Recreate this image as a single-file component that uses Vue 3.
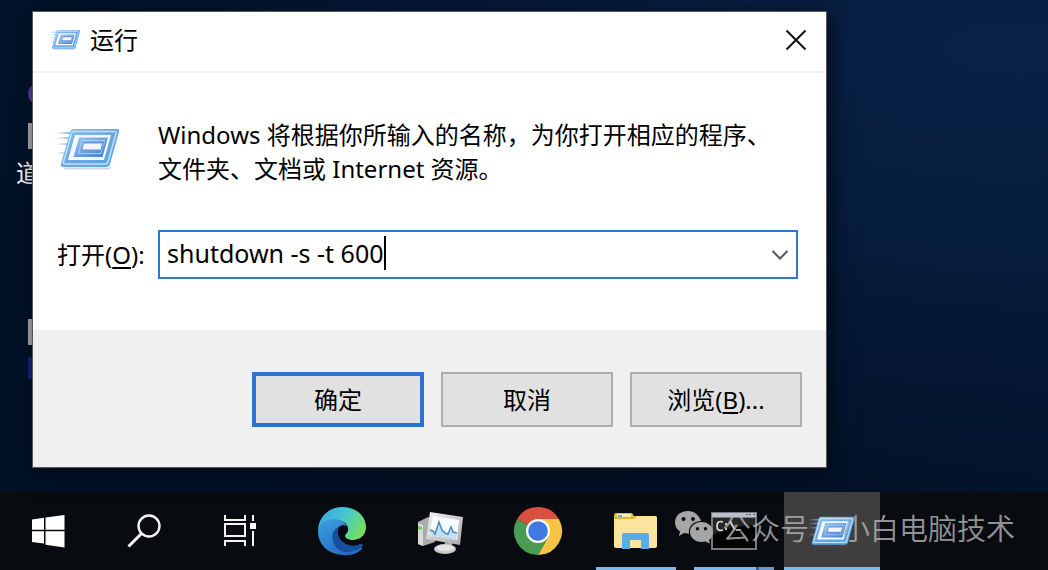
<script setup>
import { ref } from "vue";

const command = ref("shutdown -s -t 600");
const isOpen = ref(true);

// Programs pinned or running on the taskbar
const apps = [
  { id: "edge", label: "Microsoft Edge", state: "" },
  { id: "monitor", label: "性能监视器", state: "" },
  { id: "chrome", label: "Google Chrome", state: "" },
  { id: "explorer", label: "文件资源管理器", state: "running" },
  { id: "cmd", label: "命令提示符", state: "running stacked" },
  { id: "run", label: "运行", state: "active" },
];

const closeDialog = () => {
  isOpen.value = false;
};
</script>

<template>
  <div class="screen">
    <!-- Shared artwork of the Run icon -->
    <svg class="defs" width="0" height="0" aria-hidden="true">
      <defs>
        <linearGradient id="run-edge" x1="0" y1="0" x2="1" y2="1">
          <stop offset="0" stop-color="#8fc3ee" />
          <stop offset="0.5" stop-color="#6aa6e2" />
          <stop offset="1" stop-color="#58a5ea" />
        </linearGradient>
        <linearGradient id="run-core" x1="0" y1="0" x2="1" y2="1">
          <stop offset="0" stop-color="#9ccaf4" />
          <stop offset="1" stop-color="#3d7bd0" />
        </linearGradient>
        <linearGradient id="run-trail" x1="0" y1="0" x2="1" y2="0">
          <stop offset="0" stop-color="#8fc0ec" stop-opacity="0.1" />
          <stop offset="1" stop-color="#6ea9e0" />
        </linearGradient>
      </defs>
      <symbol id="run-icon" viewBox="0 0 64 42">
        <path d="M7 40.500h44q2 0 2.500-2" fill="none" stroke="#53657a" stroke-opacity=".25" stroke-width="2" />
        <path d="M0 4h15v2H0zM0 9h13v2H0zM0 15h11v2H0zM0 24h9v2H0z" fill="url(#run-trail)" />
        <path d="M16 1h44q3 0 2 3l-9 32q-1 3-4 3H6q-3 0-2-3l9-32q1-3 3-3z" fill="url(#run-edge)" />
        <path d="M16.500 3.500h41q2 0 1.500 2L51 34q-.5 2-2.500 2H8q-2 0-1.500-2l8-28.500q.5-2 2-2z" fill="none" stroke="#bfe0fa" stroke-width="1.500" />
        <path d="M18 7h36l-7 25H11z" class="run-face" />
        <path d="M22 9.500h29l-5.500 19.500H16.500z" fill="url(#run-core)" />
        <path d="M25 12.500h22.500l-3.500 13H21.500z" fill="none" stroke="#a9cff5" stroke-width="1" />
        <path d="M27 14h20l-2 9H24z" fill="#6b96d9" />
        <path d="M27 15.500h18l-1.500 6H25.500z" fill="#f3f5ff" />
      </symbol>
    </svg>

    <main class="desktop">
      <!-- Shortcuts peeking out from behind the dialog -->
      <div class="shortcut shortcut-top" aria-hidden="true">
        <span class="shortcut-dot"></span>
        <span class="shortcut-tile"></span>
        <span class="shortcut-name">道</span>
      </div>
      <div class="shortcut shortcut-low" aria-hidden="true">
        <span class="shortcut-tile"></span>
        <span class="shortcut-mark"></span>
      </div>

      <form v-if="isOpen" class="dialog" role="dialog" aria-labelledby="run-title" @submit.prevent>
        <header class="title-bar">
          <svg class="title-icon" aria-hidden="true"><use href="#run-icon" /></svg>
          <h1 id="run-title">运行</h1>
          <button type="button" class="close" aria-label="关闭" @click="closeDialog">
            <svg viewBox="0 0 22 22" aria-hidden="true">
              <path d="M1.500 1.500l19 19M20.500 1.500l-19 19" />
            </svg>
          </button>
        </header>

        <div class="content">
          <div class="intro">
            <svg class="intro-icon" aria-hidden="true"><use href="#run-icon" /></svg>
            <p>Windows 将根据你所输入的名称，为你打开相应的程序、<br />文件夹、文档或 Internet 资源。</p>
          </div>
          <div class="open-row">
            <label for="command">打开(<u>O</u>):</label>
            <div class="combo">
              <input id="command" v-model="command" type="text" autocomplete="off" spellcheck="false" />
              <span class="caret"></span>
              <button type="button" class="drop" aria-label="历史记录">
                <svg viewBox="0 0 18 12" aria-hidden="true"><path d="M1.500 2l7.500 7.500L16.500 2" /></svg>
              </button>
            </div>
          </div>
        </div>

        <footer class="actions">
          <button type="submit" class="action primary">确定</button>
          <button type="button" class="action" @click="closeDialog">取消</button>
          <button type="button" class="action">浏览(<u>B</u>)...</button>
        </footer>
      </form>
    </main>

    <nav class="taskbar" aria-label="任务栏">
      <div class="system">
        <button type="button" class="task" aria-label="开始">
          <svg width="34" height="34" viewBox="0 0 34 34" fill="#fff">
            <path d="M1 5.500l12-1.700v12H1zM14.500 3.500L33.500 1v14.800h-19zM1 17.300h12v12.200L1 28zM14.500 17.300h19V33.500l-19-2.700z" />
          </svg>
        </button>
        <button type="button" class="task" aria-label="搜索">
          <svg width="34" height="34" viewBox="0 0 34 34" fill="none" stroke="#f4f4f4">
            <circle cx="22" cy="12" r="10.500" stroke-width="2.400" />
            <path d="M14.500 19.500L1.500 32.500" stroke-width="3" />
          </svg>
        </button>
        <button type="button" class="task" aria-label="任务视图">
          <svg width="34" height="34" viewBox="0 0 34 34" fill="none" stroke="#f4f4f4" stroke-width="2">
            <path d="M2 1v5h20V1M2 10h20v12H2zM2 32v-5h20v5M30 1v6M30 17v15" />
            <path d="M27 9h6v6h-6z" fill="#fff" stroke="none" />
          </svg>
        </button>
      </div>

      <div class="apps">
        <button
          v-for="app in apps"
          :key="app.id"
          type="button"
          class="task"
          :class="app.state"
          :aria-label="app.label"
        >
          <svg v-if="app.id === 'edge'" width="50" height="50" viewBox="0 0 50 50">
            <defs>
              <linearGradient id="edge-top" x1="0" y1="0.200" x2="1" y2="0.600">
                <stop offset="0" stop-color="#36a5e0" />
                <stop offset="0.500" stop-color="#45c8cf" />
                <stop offset="1" stop-color="#78e05a" />
              </linearGradient>
              <linearGradient id="edge-body" x1="0" y1="0" x2="0.600" y2="1">
                <stop offset="0" stop-color="#3aa0e0" />
                <stop offset="1" stop-color="#286bc4" />
              </linearGradient>
            </defs>
            <path d="M1 25C1 11 12 1 25 1c14 0 24 9 24 20 0 8-6 13-13 13-6 0-8-2-8-4s3-3 3-7c0-6-6-9-13-9C10 14 3 18 1 25z" fill="url(#edge-top)" />
            <path d="M1 25c1-8 8-12 16-12 7 0 12 4 13 8-7-3-13 2-13 9 0 11 11 17 24 12 3-1 5 0 4 1-5 5-12 7-19 6C10 48 1 38 1 25z" fill="url(#edge-body)" />
            <path d="M22 21c-5 2-8 7-6 14 2 8 9 12 17 11 5-1 10-3 12-5 2-3 0-4-2-3-11 5-25-3-21-17z" fill="#174f9f" />
            <path d="M22 21c3-3 8-2 9 1 1 4-3 5-3 8 0 2 3 4 8 4 4 0 8-1 9-3l1 4-4 3c-11 4-25-5-20-17z" fill="#070b10" />
          </svg>

          <svg v-else-if="app.id === 'monitor'" width="50" height="50" viewBox="0 0 50 50">
            <defs>
              <linearGradient id="monitor-shell" x1="0" y1="0" x2="1" y2="1">
                <stop offset="0" stop-color="#f1f1f1" />
                <stop offset="1" stop-color="#aaa" />
              </linearGradient>
            </defs>
            <path d="M3 16l10-5 7 3v22L8 40l-5-2z" fill="#a9abac" />
            <path d="M3 17l5 2v21l-5-2z" fill="#d9dada" />
            <path d="M3 20l4 1v3l-4-1z" fill="#73d432" />
            <path d="M30 36l7 1v4h-8z" fill="#aaa" />
            <ellipse cx="30" cy="43" rx="11" ry="5" fill="#c9c9c9" />
            <ellipse cx="30" cy="42" rx="9" ry="3" fill="#e5e5e5" />
            <path d="M15 6l33 5-3 28-34-6z" fill="url(#monitor-shell)" />
            <path d="M18 10l26 4-2 20-28-5z" fill="#f8fbff" />
            <path d="M15 24l3 1 2 3 4-12 3 8 3 3 3 1 3-7 2 5 4 1-1 7-26-5z" fill="#c5ddf0" />
            <path d="M15 24l3 1 2 3 4-12 3 8 3 3 3 1 3-7 2 5 4 1" fill="none" stroke="#4b8bc1" stroke-width="1.500" />
          </svg>

          <svg v-else-if="app.id === 'chrome'" width="50" height="50" viewBox="0 0 50 50">
            <path d="M25 25L4.200 13A24 24 0 0 1 45.800 13z" fill="#d94f40" />
            <path d="M25 25L4.200 13A24 24 0 0 0 25 49l10.400-18z" fill="#4b9c52" />
            <path d="M25 13h20.800A24 24 0 0 1 25 49l10.400-18z" fill="#f6c443" />
            <circle cx="25" cy="25" r="12" fill="#fff" />
            <circle cx="25" cy="25" r="9.800" fill="#4079e3" />
          </svg>

          <svg v-else-if="app.id === 'explorer'" width="50" height="50" viewBox="0 0 50 50">
            <path d="M3 9q0-2 2-2h16l2 3h21q2 0 2 2v8H3z" fill="#e8b332" />
            <path d="M6 8h14v3H6z" fill="#f8efbc" />
            <path d="M7 9h4v2H7z" fill="#53b7cf" />
            <path d="M3 13h20l3-3h18q2 0 2 2v28q0 2-2 2H5q-2 0-2-2z" fill="#fbe49d" />
            <path d="M11 43V29q0-2 2-2h23q2 0 2 2v14h-8v-9H19v9z" fill="#5aace2" />
          </svg>

          <svg v-else-if="app.id === 'cmd'" width="50" height="50" viewBox="0 0 50 50">
            <path d="M2 6h46v38H2z" fill="#777b7f" />
            <path d="M3 7h44v4H3z" fill="#b9bfcb" />
            <path d="M37 8h2v1h-2zM40 8h2v1h-2zM44 8h2v1h-2z" fill="#4c5a75" />
            <path d="M4 12h42v30H4z" fill="#030303" />
            <path d="M4 12h42v7Q20 19 4 29z" fill="#262626" />
            <path d="M14 16q-6-2-6 4t6 4M17 17v2M17 22v2M21 15l5 9M27 24h5" fill="none" stroke="#ddd" stroke-width="1.700" />
          </svg>

          <svg v-else class="task-run"><use href="#run-icon" /></svg>
        </button>
      </div>
    </nav>

    <div class="watermark">
      <svg width="40" height="34" viewBox="0 0 40 34" aria-hidden="true">
        <path fill-rule="evenodd" d="M14 1C6 1 1 6 1 12.500c0 4 2 7 5 9L5 26l5-3 5 .8C14 16 20 11 27 11 25 5 20 1 14 1zM9.500 7a2 2 0 1 1 0 4 2 2 0 0 1 0-4zM19 7a2 2 0 1 1 0 4 2 2 0 0 1 0-4z" />
        <path fill-rule="evenodd" d="M27.500 12C21 12 16 16.500 16 22s5 10 11.500 10l4-.6L36 33.500 35 30c2.500-2 4-4.500 4-8 0-5.500-5-10-11.500-10zM23.500 17a1.700 1.700 0 1 1 0 3.400 1.700 1.700 0 0 1 0-3.400zM31.500 17a1.700 1.700 0 1 1 0 3.400 1.700 1.700 0 0 1 0-3.400z" />
      </svg>
      <span>公众号</span>
      <span class="watermark-dot">·</span>
      <span>小白电脑技术</span>
    </div>
  </div>
</template>

<style>
body {
  margin: 0;
  background: #020b1c;
}
</style>

<style scoped>
.screen {
  position: relative;
  display: flex;
  flex-direction: column;
  min-height: 100vh;
  overflow: hidden;
  font-family: "Noto Sans", "Noto Sans CJK SC", sans-serif;
  font-size: 24px;
  color: #000;
}

.screen * {
  box-sizing: border-box;
}

.defs {
  position: absolute;
}

button {
  padding: 0;
  border: 0;
  background: none;
  font: inherit;
  color: inherit;
}

u {
  text-decoration-thickness: 2px;
  text-underline-offset: 3px;
}

.desktop {
  position: relative;
  flex: 1;
  padding: 11px 32px 24px;
  background:
    radial-gradient(ellipse at 96% 10%, #092147 0%, rgba(7, 31, 64, 0.9) 25%, rgba(4, 20, 44, 0) 75%),
    linear-gradient(90deg, #021126, #020f24 60%, #031229);
}

/* Desktop shortcuts */
.shortcut {
  position: absolute;
  left: 16px;
  width: 24px;
  display: flex;
  flex-direction: column;
  align-items: flex-end;
}

.shortcut-top {
  top: 85px;
}

.shortcut-low {
  top: 319px;
}

.shortcut-dot {
  width: 12px;
  height: 18px;
  border-radius: 50%;
  background: #5840a0;
}

.shortcut-tile {
  width: 12px;
  height: 26px;
  background: #b8b8b8;
}

.shortcut-top .shortcut-tile {
  margin-top: 20px;
}

.shortcut-name {
  align-self: flex-start;
  margin-top: 8px;
  line-height: 32px;
  color: #fff;
}

.shortcut-mark {
  width: 12px;
  height: 22px;
  margin-top: 12px;
  background: #1b2080;
}

/* Run dialog */
.dialog {
  position: relative;
  width: 100%;
  max-width: 795px;
  border: 1px solid #55585a;
  background: #fff;
  box-shadow: 4px 4px 20px rgba(2, 8, 16, 0.8);
}

.title-bar {
  display: flex;
  align-items: center;
  height: 61px;
  padding: 0 19px 4px 17px;
  border-bottom: 2px solid #f0f0f0;
}

.title-icon {
  width: 31px;
  height: 22px;
}

h1 {
  margin: 0 auto 0 9px;
  font-size: 24px;
  font-weight: 400;
  line-height: 34px;
}

.close {
  width: 22px;
  height: 22px;
}

.close svg,
.drop svg {
  display: block;
  fill: none;
  stroke: #111;
  stroke-width: 2;
}

.content {
  padding: 45px 28px 51px 24px;
}

.intro {
  display: flex;
  gap: 37px;
}

.intro-icon {
  flex: none;
  width: 64px;
  height: 42px;
  margin-top: 10px;
}

.run-face {
  fill: #f5f9ff;
}

.intro p {
  margin: 0;
  line-height: 34px;
}

.open-row {
  display: flex;
  align-items: center;
  margin-top: 44px;
}

.open-row label {
  flex: none;
  width: 101px;
  line-height: 34px;
}

.combo {
  flex: 1;
  display: flex;
  align-items: center;
  height: 49px;
  padding: 0 7px;
  border: 2px solid #2f75d1;
  background: #fff;
}

.combo input {
  field-sizing: content;
  min-width: 0;
  height: 40px;
  padding: 0 0 4px;
  border: 0;
  outline: 0;
  font: inherit;
  font-size: 25px;
  color: inherit;
  caret-color: transparent;
}

.caret {
  width: 2px;
  height: 34px;
  margin-bottom: 4px;
  background: #000;
}

.drop {
  width: 18px;
  height: 12px;
  margin-left: auto;
}

.drop svg {
  stroke: #555;
}

.actions {
  display: flex;
  justify-content: flex-end;
  gap: 17px;
  padding: 42px 24px 40px;
  background: #f0f0f0;
}

.action {
  width: 172px;
  height: 55px;
  padding-bottom: 3px;
  border: 2px solid #adadad;
  background: #e1e1e1;
}

.action.primary {
  border: 4px solid #2f70d0;
}

/* Taskbar */
.taskbar {
  display: flex;
  gap: 6px;
  height: 78px;
  background: #080b0f;
}

.system,
.apps {
  display: flex;
}

.apps {
  gap: 2px;
}

.task {
  position: relative;
  display: flex;
  align-items: center;
  justify-content: center;
  width: 96px;
  height: 78px;
}

.task-run {
  width: 47px;
  height: 33px;
}

.task-run .run-face {
  fill: #c0cad4;
}

.task.active {
  background: #3e3e3e;
}

.task.running::after,
.task.active::after {
  content: "";
  position: absolute;
  right: 8px;
  bottom: 0;
  left: 8px;
  height: 3px;
  background: #82b5e8;
}

.task.active::after {
  right: 0;
  left: 0;
}

.task.stacked::after {
  background: linear-gradient(90deg, #82b5e8 62px, #435f80 62px, #435f80 65px, #6c98c5 65px);
}

/* Watermark laid over the taskbar */
.watermark {
  position: absolute;
  right: 33px;
  bottom: 23px;
  display: flex;
  align-items: center;
  font-family: "Noto Sans CJK SC", sans-serif;
  font-size: 29px;
  font-weight: 350;
  line-height: 40px;
  color: rgba(185, 185, 185, 0.8);
  pointer-events: none;
}

.watermark svg {
  margin-right: 8px;
  fill: #a6a6a6;
}

.watermark-dot {
  width: 32px;
  font-family: "Noto Sans", sans-serif;
  text-align: center;
}
</style>
